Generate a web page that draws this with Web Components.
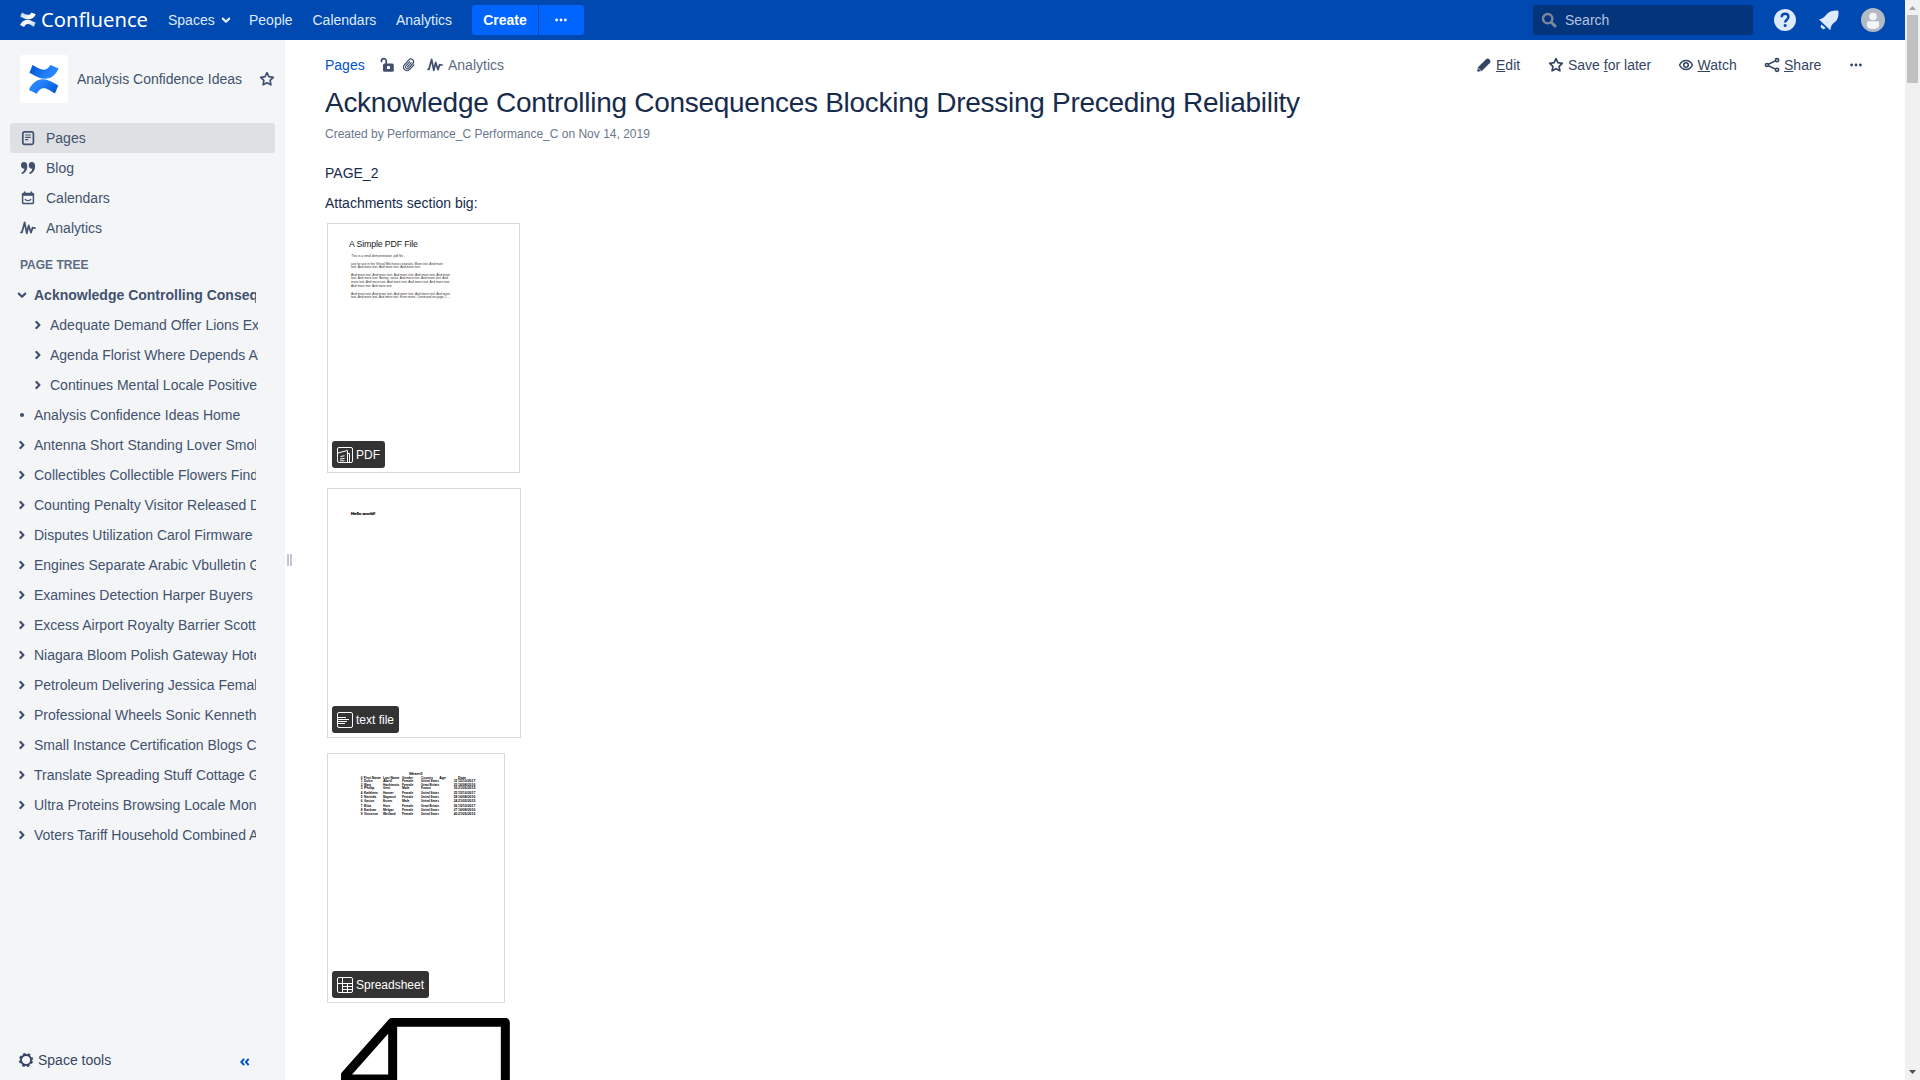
<!DOCTYPE html>
<html lang="en">
<head>
<meta charset="utf-8">
<title>Acknowledge Controlling Consequences Blocking Dressing Preceding Reliability</title>
<style>
html,body{margin:0;height:100%;overflow:hidden}
body{font:14px/20px "Liberation Sans",Arial,sans-serif;color:#172b4d;background:#fff}
</style>
</head>
<body>
<wiki-app></wiki-app>
<script>
const ICONS = {
  chev: '<path d="M4.8 6.6 8 9.8l3.2-3.2" fill="none" stroke="currentColor" stroke-width="2.2" stroke-linecap="round" stroke-linejoin="round"/>',
  right: '<path d="M6.4 5 9.4 8l-3 3" fill="none" stroke="currentColor" stroke-width="2.3" stroke-linecap="round" stroke-linejoin="round"/>',
  dot: '<circle cx="8" cy="8" r="2.1" fill="currentColor"/>',
  more: '<g fill="currentColor"><circle cx="3" cy="8" r="1.6"/><circle cx="8" cy="8" r="1.6"/><circle cx="13" cy="8" r="1.6"/></g>',
  search: '<g fill="none" stroke="currentColor" stroke-width="2.4"><circle cx="6.7" cy="6.7" r="4.7"/><path d="m10.2 10.2 3.800 3.800" stroke-width="3" stroke-linecap="round"/></g>',
  star: '<path d="m8 1.7 1.9 4 4.4.6-3.2 3.1.8 4.4L8 11.7l-3.9 2.1.8-4.4L1.7 6.3l4.4-.6z" fill="none" stroke="currentColor" stroke-width="1.7" stroke-linejoin="round"/>',
  page: '<rect x="2.800" y="1.800" width="10.6" height="12.6" rx="1.6" fill="none" stroke="currentColor" stroke-width="1.7"/><path d="M5.200 5h5.600M5.200 7.300h5.600M5.200 9.600h3" fill="none" stroke="currentColor" stroke-width="1.2"/>',
  quote: '<g fill="currentColor"><path d="M1 5a3 3 0 0 1 3-3c2.1 0 3.3 1.6 3.3 4.2 0 4-2.1 7-5.4 7.8l-.5-1.3c1.7-.8 2.8-2.2 3.1-4A3.2 3.2 0 0 1 1 5z"/><path d="M8.8 5a3 3 0 0 1 3-3c2.1 0 3.3 1.6 3.3 4.2 0 4-2.1 7-5.4 7.8l-.5-1.3c1.7-.8 2.8-2.2 3.1-4A3.2 3.2 0 0 1 8.8 5z"/></g>',
  cal: '<path d="M4.7 1.6v3M11.300 1.6v3" stroke="currentColor" stroke-width="1.6"/><rect x="2.600" y="3.400" width="10.800" height="10" rx=".8" fill="none" stroke="currentColor" stroke-width="1.5"/><path d="M2 4.600h12" stroke="currentColor" stroke-width="2.400"/><path d="M4.900 9c1.200 2.100 5 2.100 6.200 0" fill="none" stroke="currentColor" stroke-width="1.3"/>',
  pulse: '<path d="M1 12.400h.9L4.600 2.400 6.800 13.300 8.700 5.400 10.900 12.600 12.700 7.600 15 8" fill="none" stroke="currentColor" stroke-width="1.75" stroke-linejoin="round" stroke-linecap="round"/>',
  unlock: '<rect x="4" y="6.4" width="10.8" height="8.4" rx="1.5" fill="currentColor"/><path d="M2.4 4.6C2.3.7 7.2.7 7.2 4v3.5" fill="none" stroke="currentColor" stroke-width="1.7" stroke-linecap="round"/><rect x="8" y="9.1" width="3" height="3" rx=".5" fill="#fff"/>',
  clip: '<g transform="rotate(42 8 8)" fill="none" stroke="currentColor" stroke-width="1.2" stroke-linecap="round"><path d="M11.500 4.600v6.200a3.500 3.500 0 0 1-7 0V4.300a2.700 2.700 0 0 1 5.400 0v6.300a1.800 1.800 0 0 1-3.600 0V5"/><path d="M8.1 4.8v5.600"/></g>',
  pencil: '<path d="M1.2 14.8 2 10.3 9.8 2.4c1.4-1.2 2.4-1.1 3.7.1 1.2 1.3 1.4 2.4.1 3.8L5.8 14z" fill="currentColor"/><path d="m2 10.7 3.3 3.3" stroke="#fff" stroke-width=".7"/>',
  eye: '<g fill="none" stroke="currentColor" stroke-width="1.5"><path d="M1.600 8C4.300 1.900 11.700 1.900 14.400 8 11.700 14.100 4.300 14.100 1.600 8z"/><circle cx="8" cy="8" r="2.3"/></g>',
  share: '<g fill="none" stroke="currentColor" stroke-width="1.6"><circle cx="2.9" cy="8" r="1.5"/><circle cx="13" cy="3.2" r="1.6"/><circle cx="13" cy="12.8" r="1.6"/><path d="m4.3 7.3 7.2-3.4M4.3 8.7l7.2 3.4"/></g>',
  gear: '<circle cx="8" cy="8" r="5" fill="none" stroke="currentColor" stroke-width="1.9"/><circle cx="8" cy="8" r="6.2" fill="none" stroke="currentColor" stroke-width="1.8" stroke-dasharray="2.6 2.27" stroke-dashoffset="-1.1"/>',
  dbl: '<path d="M7 4.4 3.8 8 7 11.6M12.2 4.4 9 8l3.2 3.6" fill="none" stroke="currentColor" stroke-width="2.2"/>',
  help: '<circle cx="8" cy="8" r="7.3" fill="currentColor"/><path d="M5.8 6.100c0-3 4.500-2.900 4.500-.1 0 1.800-2.200 1.900-2.200 3.700" fill="none" stroke="#0049b0" stroke-width="1.6"/><circle cx="8.1" cy="11.7" r="1" fill="#0049b0"/>',
  bell: '<path d="M.8 7.300C3.600 6.700 4.800 5.600 6.100 3.900 8.200 1.300 11 .2 15.500.5c.5 4.100-.4 7.100-3.100 9.100-1.800 1.400-2.700 2.700-3 5.900z" fill="currentColor"/><path d="M2.700 11a2 2 0 0 0 3.100 2.800z" fill="currentColor"/>',
  pdf: '<g fill="none" stroke="currentColor"><rect x=".5" y=".5" width="15" height="15" rx="1.5"/><path d="m1 6 9.5-2.5v12M10.5 6.5h2v9M3.5 9.5l4-.7M3 12l4.5-.6M3 13.8h4.5"/></g>',
  text: '<g fill="none" stroke="currentColor"><rect x=".5" y=".5" width="15" height="15" rx="1.5"/><path d="M1 5.500h8M1 7.500h11M1 9.500h9M1 11.500h7"/></g>',
  sheet: '<g fill="none" stroke="currentColor"><rect x=".5" y=".5" width="15" height="15" rx="1.5"/><path d="M5.500 1v14.500M1 6.500h14.500M5.500 9.500h10M5.500 12.500h10M10.500 6.500v9"/></g>'
};
const define = (name, html, init) => {
  const t = document.createElement('template');
  t.innerHTML = html;
  customElements.define(name, class extends HTMLElement {
    constructor(){ super(); this.attachShadow({mode:'open'}).append(t.content.cloneNode(true)); }
    connectedCallback(){ if (init) init(this, this.shadowRoot); }
  });
};
const placeIcon = (root, name) => {
  const icon = document.createElement('ui-icon');
  icon.setAttribute('name', name);
  root.querySelector('i').replaceWith(icon);
};

define('ui-icon', '<style>:host{display:block;flex:none;width:16px;height:16px}svg{display:block;width:100%;height:100%}</style><svg viewBox="0 0 16 16"></svg>',
  (el, r) => { r.querySelector('svg').innerHTML = ICONS[el.getAttribute('name')]; });

define('confluence-mark', `<style>:host{display:block;flex:none}svg{display:block;width:100%;height:100%}</style>
<svg viewBox="0 0 30 34" preserveAspectRatio="none"><defs>
<linearGradient id="a" x1="0" y1="0" x2="1" y2=".4"><stop offset="0" stop-color="var(--d,#0052cc)"/><stop offset=".8" stop-color="var(--l,#2684ff)"/></linearGradient>
<linearGradient id="b" x1="1" y1="1" x2="0" y2=".5"><stop offset="0" stop-color="var(--d,#0052cc)"/><stop offset=".8" stop-color="var(--l,#2684ff)"/></linearGradient></defs>
<path fill="url(#a)" d="M3.600 1C6 2.300 8.600 4.600 12 5.900 17 7.600 19.500 5 21.500 1.200L29.600 5C26 14.500 19 19.300 9.500 15.200 6.500 13.800 3.300 12 .4 10z"/>
<path fill="url(#b)" d="M26 33.500C22.800 32 21 29.600 17 27.900 12.500 26.200 9.500 29.600 7.800 33.800L0 29.400C3.500 20 10.500 14.800 19.500 18.600 23 20.100 26 22 29.200 24.400z"/></svg>`);

define('top-bar', `<style>
:host{display:flex;align-items:center;height:40px;background:#0049b0;color:#deebff;box-sizing:border-box;padding-left:20px}
confluence-mark{width:16px;height:15px;margin-bottom:1px;--d:#b5c9e8;--l:#fff}
.word{display:block;width:106px;height:40px;margin-left:6px;overflow:visible}
nav{display:flex;margin-left:20px;line-height:20px}
nav span{display:block}
.sp{width:81px;display:flex;gap:3px;align-items:center}.pe{width:63.500px}.ca{width:83.500px}.an{width:76px}
.btns{display:flex;gap:1px}
.btns>*{height:30px;background:#0065ff;color:#fff;display:flex;align-items:center;justify-content:center;box-sizing:border-box}
.c{width:66px;font-weight:700;border-radius:3px 0 0 3px}.m{width:45px;border-radius:0 3px 3px 0;padding-right:2px}
.m ui-icon{width:14px}
.search{margin-left:auto;width:220px;height:30px;border-radius:3px;background:#04347c;display:flex;align-items:center;color:#b3c4e0;box-sizing:border-box;padding-left:8px;gap:8px}
.search ui-icon{color:#7a869a}
.h{width:24px;height:24px;margin-left:20px}.b{width:21px;height:21px;margin-left:21px}
.av{width:24px;height:24px;margin:0 20px 0 22px;display:block}
</style>
<confluence-mark></confluence-mark>
<svg class="word"><text x="-1" y="26.500" font-family="Noto Sans,sans-serif" font-size="20.500" fill="#fff" textLength="107" lengthAdjust="spacingAndGlyphs">Confluence</text></svg>
<nav><span class="sp">Spaces <ui-icon name="chev"></ui-icon></span><span class="pe">People</span><span class="ca">Calendars</span><span class="an">Analytics</span></nav>
<div class="btns"><div class="c">Create</div><div class="m"><ui-icon name="more"></ui-icon></div></div>
<div class="search"><ui-icon name="search"></ui-icon>Search</div>
<ui-icon class="h" name="help"></ui-icon><ui-icon class="b" name="bell"></ui-icon>
<svg class="av" viewBox="0 0 24 24"><circle cx="12" cy="12" r="12" fill="#b3bac5"/><circle cx="12" cy="8.500" r="3.800" fill="#f4f5f7"/><path d="M6 14.200q0-1 1-1h10q1 0 1 1v3.500q0 3-6 3.300-6-.3-6-3.300z" fill="#f4f5f7"/></svg>`);

define('nav-item', `<style>:host{display:flex;align-items:center;height:30px;margin:0 10px;padding-left:10px;border-radius:3px;gap:10px;color:#42526e}:host([active]){background:#dfe0e4}</style><i></i><slot></slot>`,
  (el, r) => placeIcon(r, el.getAttribute('icon')));

define('tree-item', `<style>:host{display:flex;align-items:center;height:30px;margin-left:14px;width:242px;color:#42526e;gap:4px}
:host([child]){margin-left:30px;width:228px}:host([open]){font-weight:700}
span{flex:1;min-width:0;overflow:hidden;white-space:nowrap}</style><i></i><span><slot></slot></span>`,
  (el, r) => placeIcon(r, el.getAttribute('icon') || 'right'));

define('side-bar', `<style>
:host{display:flex;flex-direction:column;width:285px;background:#f4f5f7;color:#42526e;flex:none}
.head{display:flex;align-items:center;height:48px;margin:15px 0 20px 20px}
.logo{width:48px;height:48px;border-radius:3px;background:#fff;display:flex;align-items:center;justify-content:center}
.logo confluence-mark{width:30px;height:30px}
.name{width:182px;margin-left:9px}
h5{font-size:12px;line-height:14px;font-weight:700;margin:14px 0 8px 20px;height:15px;color:#5e6c84;padding-top:1px;box-sizing:border-box}
.foot{margin-top:auto;display:flex;align-items:center;height:40px;padding:0 33px 0 18px;gap:4px;color:#344563}
.foot .d{margin-left:auto;color:#0052cc;width:14px;height:14px;padding-top:4px}
</style>
<div class="head"><div class="logo"><confluence-mark></confluence-mark></div><span class="name">Analysis Confidence Ideas</span><ui-icon name="star"></ui-icon></div>
<nav-item icon="page" active>Pages</nav-item><nav-item icon="quote">Blog</nav-item><nav-item icon="cal">Calendars</nav-item><nav-item icon="pulse">Analytics</nav-item>
<h5>PAGE TREE</h5>
<tree-item open icon="chev">Acknowledge Controlling Conseq</tree-item>
<tree-item child>Adequate Demand Offer Lions Ex</tree-item>
<tree-item child>Agenda Florist Where Depends Av</tree-item>
<tree-item child>Continues Mental Locale Positive</tree-item>
<tree-item icon="dot">Analysis Confidence Ideas Home</tree-item>
<tree-item>Antenna Short Standing Lover Smok</tree-item>
<tree-item>Collectibles Collectible Flowers Find</tree-item>
<tree-item>Counting Penalty Visitor Released D</tree-item>
<tree-item>Disputes Utilization Carol Firmware</tree-item>
<tree-item>Engines Separate Arabic Vbulletin G</tree-item>
<tree-item>Examines Detection Harper Buyers</tree-item>
<tree-item>Excess Airport Royalty Barrier Scott</tree-item>
<tree-item>Niagara Bloom Polish Gateway Hote</tree-item>
<tree-item>Petroleum Delivering Jessica Femal</tree-item>
<tree-item>Professional Wheels Sonic Kenneth</tree-item>
<tree-item>Small Instance Certification Blogs C</tree-item>
<tree-item>Translate Spreading Stuff Cottage G</tree-item>
<tree-item>Ultra Proteins Browsing Locale Mon</tree-item>
<tree-item>Voters Tariff Household Combined A</tree-item>
<div class="foot"><ui-icon name="gear"></ui-icon><span>Space tools</span><ui-icon class="d" name="dbl"></ui-icon></div>`);

define('drag-handle', `<style>:host{display:flex;width:10px;flex:none;justify-content:center;gap:1px;padding-top:514px;box-sizing:border-box;padding-right:1px}i{width:2px;height:12px;background:#c1c7d0}</style><i></i><i></i>`);

define('file-preview', `<style>
:host{display:block;position:relative;box-sizing:border-box;height:250px;border:1px solid #dadada;background:#fff;margin:0 0 15px 2px;overflow:hidden}
.tag{position:absolute;left:4px;bottom:4px;height:27px;border-radius:3px;background:#333;color:#fff;display:flex;align-items:center;gap:3px;padding:0 5px;font-size:12px}
</style><slot></slot><div class="tag"><i></i><span></span></div>`,
  (el, r) => { placeIcon(r, el.getAttribute('icon')); r.querySelector('.tag span').textContent = el.getAttribute('label'); });

define('pdf-page', `<style>:host,svg{display:block}text{font-family:"Liberation Sans",sans-serif}</style><svg width="191" height="248" viewBox="24 27 573 744"></svg>`, (el, r) => {
  const L = [[94,126,161,'This is a small demonstration .pdf file -'],[93,149,276,'just for use in the Virtual Mechanics tutorials. More text. And more'],[93,160,209,'text. And more text. And more text. And more text.'],[93,182,297,'And more text. And more text. And more text. And more text. And more'],[93,193,291,'text. And more text. Boring, zzzzz. And more text. And more text. And'],[93,205,297,'more text. And more text. And more text. And more text. And more text.'],[93,216,124,'And more text. And more text.'],[93,239,297,'And more text. And more text. And more text. And more text. And more'],[93,250,296,'text. And more text. And more text. Even more. Continued on page 2 ...']];
  r.querySelector('svg').innerHTML = '<text x="87" y="96" font-size="26.500" fill="#222" textLength="207">A Simple PDF File</text>' + L.map(([x,y,w,s]) => `<text x="${x}" y="${y}" font-size="9.300" fill="#333" textLength="${w}" lengthAdjust="spacingAndGlyphs">${s}</text>`).join('');
});
define('text-page', `<style>:host,svg{display:block}</style><svg width="192" height="248" viewBox="24 27 576 744"><text x="93" y="104" font-family="Liberation Sans" font-weight="700" font-size="12" stroke="#000" stroke-width=".6" textLength="73" lengthAdjust="spacingAndGlyphs">Hello world!</text></svg>`);
define('sheet-page', `<style>:host,svg{display:block}text{font-family:"Liberation Sans",sans-serif;font-size:9.5px;font-weight:700}</style><svg width="176" height="248" viewBox="24 27 528 744"></svg>`, (el, r) => {
  const us = 'United States', gb = 'Great Britain', d = ['15/10/2017','16/08/2016','21/05/2015'];
  const rows = [['Dulce','Abril','Female',us,32],['Mara','Hashimoto','Female',gb,25],['Philip','Gent','Male','France',36],['Kathleen','Hanner','Female',us,25],['Nereida','Magwood','Female',us,58],['Gaston','Brumm','Male',us,24],['Etta','Hurn','Female',gb,56],['Earlean','Melgar','Female',us,27],['Vincenza','Weiland','Female',us,40]];
  const ys = [112,122,133,146,159,171,185,197,209];
  const t = (x, y, s, w) => `<text x="${x}" y="${y}"${w ? ` textLength="${w}" lengthAdjust="spacingAndGlyphs"` : ''}>${s}</text>`;
  r.querySelector('svg').innerHTML = t(267,90,'Sheet1',42) + t(122,101,'0') + t(131,101,'First Name',52) + t(189,101,'Last Name',49) + t(246,101,'Gender',33) + t(303,101,'Country',36) + t(358,101,'Age',20) + t(414,101,'Date',24) +
    rows.map((o, i) => t(122,ys[i],i + 1) + t(132,ys[i],o[0],o[0].length * 5.2) + t(189,ys[i],o[1],o[1].length * 5.4) + t(246,ys[i],o[2],o[2].length * 5.6) + t(303,ys[i],o[3],o[3].length > 7 ? 54 : 30) + t(401,ys[i],o[4],11) + t(414,ys[i],d[i % 3],52)).join('');
});

define('page-tools', `<style>:host{display:flex;flex:none;color:#344563;white-space:nowrap}.t{display:flex;align-items:center;gap:4px}.e{width:72px}.s{width:130px}.w{width:86px}.h{width:85px}.t.w{gap:3.500px}</style>
<div class="t e"><ui-icon name="pencil"></ui-icon><span><u>E</u>dit</span></div><div class="t s"><ui-icon name="star"></ui-icon><span>Save <u>f</u>or later</span></div><div class="t w"><ui-icon name="eye"></ui-icon><span><u>W</u>atch</span></div><div class="t h"><ui-icon name="share"></ui-icon><span><u>S</u>hare</span></div><ui-icon name="more" style="width:14px;height:20px"></ui-icon>`);

define('page-content', `<style>
:host{display:block;flex:1;min-width:0;padding:15px 42px 0 30px}
.bar{display:flex;justify-content:space-between;height:20px}
.crumbs{display:flex;align-items:center;color:#5e6c84}
.crumbs b{font-weight:400;color:#0052cc;width:54px}.crumbs ui-icon{color:#42526e;margin-right:6px}.crumbs .w{margin-right:5px;margin-left:4px}
h1{font-size:28px;line-height:32px;font-weight:400;letter-spacing:-.28px;margin:12px 0 0;white-space:nowrap}
.meta{font-size:12px;line-height:20px;color:#6b778c;margin:5px 0 0}
p{margin:10px 0 0}.first{margin-top:19px}
.files{padding-top:10px}
.doc{display:block;margin-left:16px}
</style>
<div class="bar"><div class="crumbs"><b>Pages</b><ui-icon name="unlock"></ui-icon><ui-icon name="clip"></ui-icon><ui-icon class="w" name="pulse"></ui-icon><span>Analytics</span></div><page-tools></page-tools></div>
<h1>Acknowledge Controlling Consequences Blocking Dressing Preceding Reliability</h1>
<div class="meta">Created by Performance_C Performance_C on Nov 14, 2019</div>
<p class="first">PAGE_2</p><p>Attachments section big:</p>
<div class="files">
<file-preview style="width:193px" icon="pdf" label="PDF"><pdf-page></pdf-page></file-preview>
<file-preview style="width:194px" icon="text" label="text file"><text-page></text-page></file-preview>
<file-preview style="width:178px" icon="sheet" label="Spreadsheet"><sheet-page></sheet-page></file-preview>
<svg class="doc" width="169" height="80" viewBox="63 819 507 240"><path d="M76 1059V991L217 832H556V1059M218 832V1002H76" fill="none" stroke="#000" stroke-width="27" stroke-linejoin="round"/></svg>
</div>`);

define('scroll-bar', `<style>:host{display:flex;flex-direction:column;align-items:center;width:15px;height:100%;background:#f1f1f1;flex:none}i{width:11px;height:68px;background:#c1c1c1}svg{display:block;width:15px;height:15px;flex:none}.d{margin-top:auto}</style><svg><path d="M4 10h7L7.500 6z" fill="#a3a3a3"/></svg><i></i><svg class="d"><path d="M4 5h7L7.500 9z" fill="#505050"/></svg>`);

define('wiki-app', `<style>:host{display:flex;width:1920px;height:1080px;overflow:hidden}.col{display:flex;flex-direction:column;flex:1;min-width:0}.body{display:flex;flex:1;min-height:0}</style>
<div class="col"><top-bar></top-bar><div class="body"><side-bar></side-bar><drag-handle></drag-handle><page-content></page-content></div></div><scroll-bar></scroll-bar>`);
</script>
</body>
</html>
